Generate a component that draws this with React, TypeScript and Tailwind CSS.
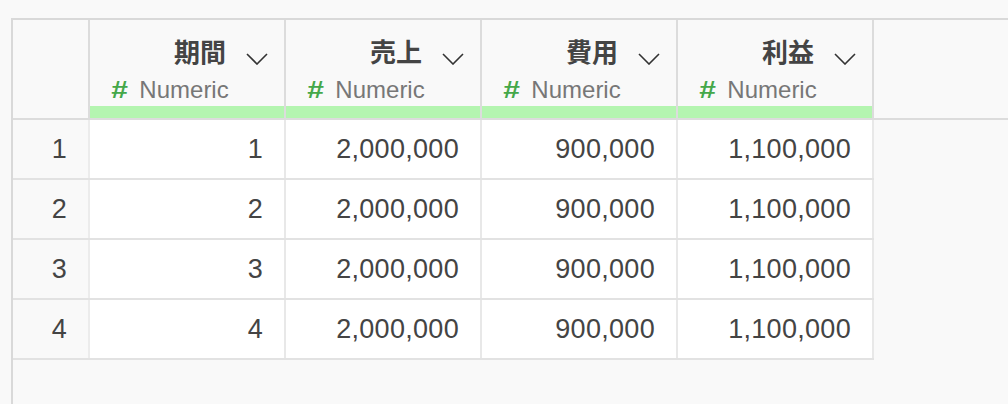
const columns = ["期間", "売上", "費用", "利益"];

const rows = [
  ["1", "2,000,000", "900,000", "1,100,000"],
  ["2", "2,000,000", "900,000", "1,100,000"],
  ["3", "2,000,000", "900,000", "1,100,000"],
  ["4", "2,000,000", "900,000", "1,100,000"],
];

function Chevron() {
  return (
    <svg width="22" height="12" viewBox="0 0 22 12" fill="none">
      <path d="M1 1 L11 11 L21 1" stroke="#333" strokeWidth="1.6" />
    </svg>
  );
}

export default function App() {
  return (
    <div
      className="h-[404px] overflow-hidden bg-[#f9f9f9] pt-[18px] pl-[11px]"
      style={{ fontFamily: '"Liberation Sans", "Noto Sans CJK JP", sans-serif' }}
    >
      <div className="h-full border-l-2 border-t-2 border-[#d9d9d9]">
        {/* header */}
        <div className="flex h-[100px] border-b-2 border-[#dcdcdc]">
          <div className="w-[77px] border-r-2 border-[#dcdcdc]" />
          {columns.map((name) => (
            <div key={name} className="flex w-[196px] flex-col border-r-2 border-[#dcdcdc]">
              <div className="mt-[18px] flex h-[30px] items-center justify-end gap-[20px] pr-[16px]">
                <span className="text-[26px] leading-[30px] font-bold text-[#444]">{name}</span>
                <span className="pt-[11px]">
                  <Chevron />
                </span>
              </div>
              <div className="mt-[8px] flex h-[28px] items-center pl-[23px] text-[24px] leading-[28px]">
                <span className="mr-[13px] inline-block scale-x-125 font-bold text-[#45a84a]">#</span>
                <span className="text-[#777]">Numeric</span>
              </div>
              <div className="mt-auto h-[12px] bg-[#b4f5b0]" />
            </div>
          ))}
        </div>

        {/* rows */}
        {rows.map((r, i) => (
          <div key={i} className="flex h-[60px] w-fit border-b-2 border-[#e2e2e2]">
            <div className="flex w-[77px] items-center justify-end border-r-2 border-[#ececec] bg-[#f9f9f9] pr-[21px] text-[27px] tracking-[0.3px] text-[#444]">
              {i + 1}
            </div>
            {r.map((v, j) => (
              <div
                key={j}
                className="flex w-[196px] items-center justify-end border-r-2 border-[#e8e8e8] bg-white pr-[21px] text-[27px] tracking-[0.3px] text-[#444]"
              >
                {v}
              </div>
            ))}
          </div>
        ))}
      </div>
    </div>
  );
}
